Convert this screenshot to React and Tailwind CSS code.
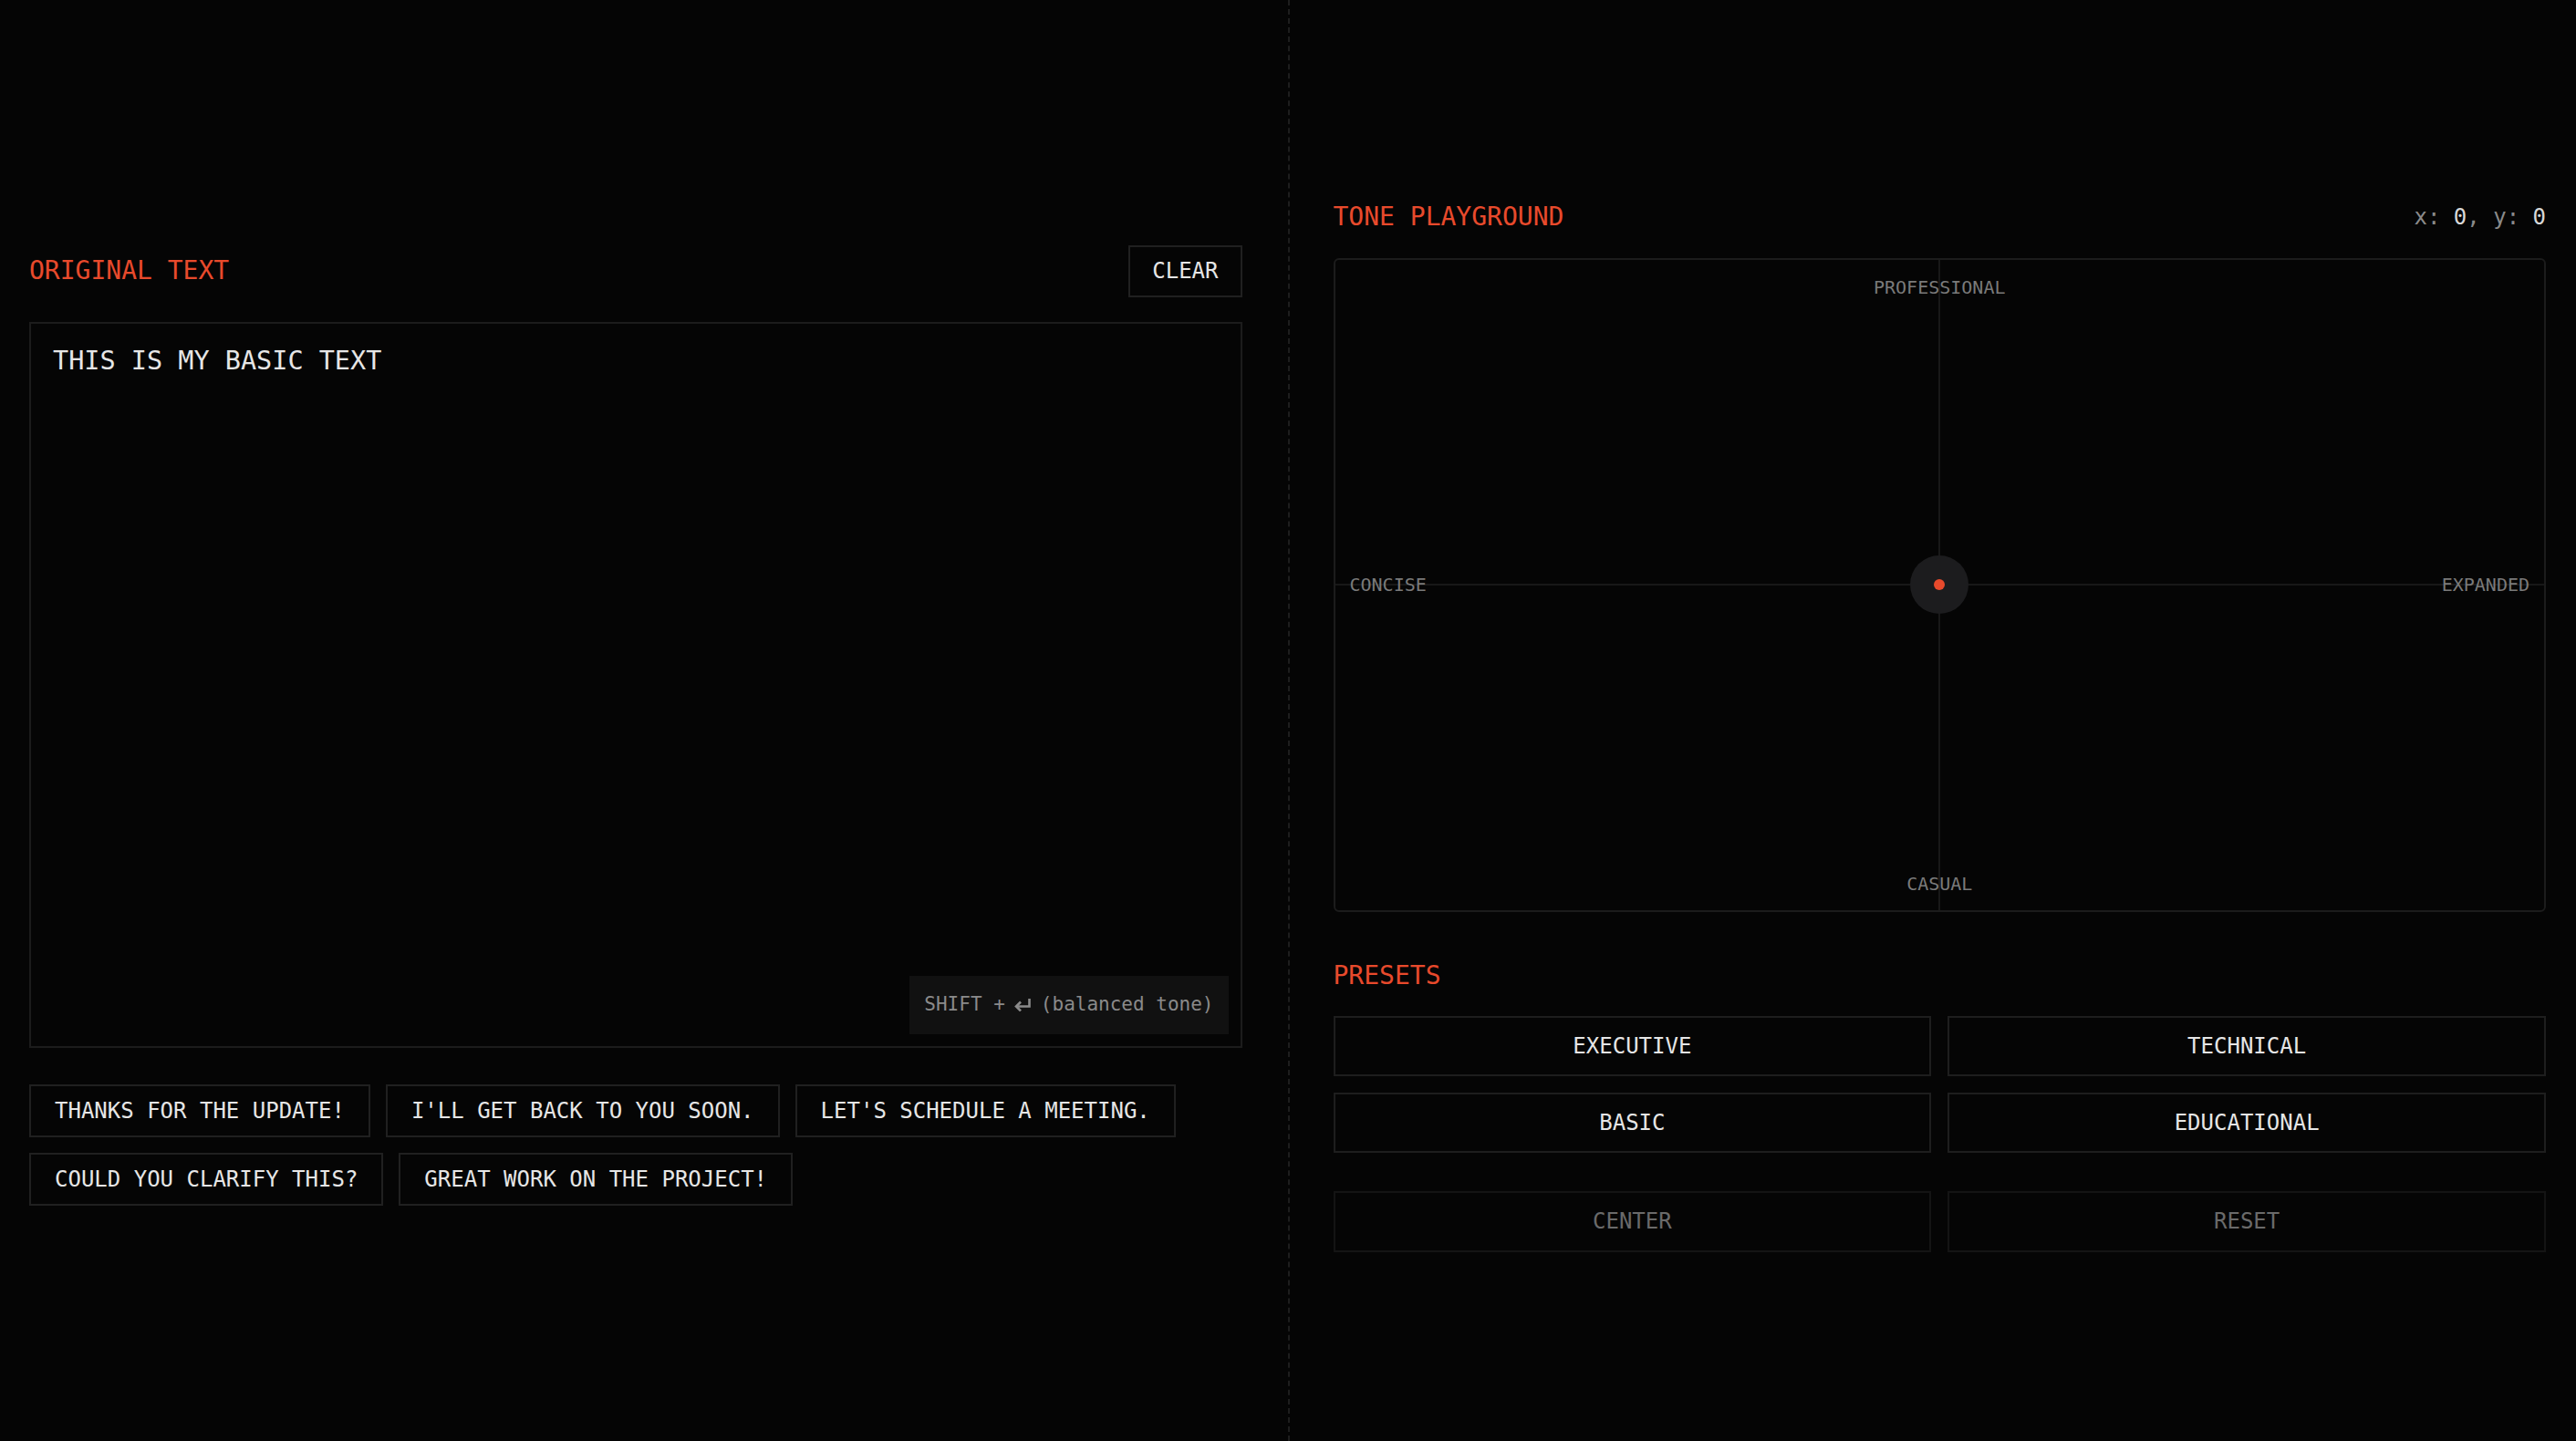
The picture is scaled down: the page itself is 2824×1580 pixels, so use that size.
import React, { useState } from "react";

const chips = [
  "THANKS FOR THE UPDATE!",
  "I'LL GET BACK TO YOU SOON.",
  "LET'S SCHEDULE A MEETING.",
  "COULD YOU CLARIFY THIS?",
  "GREAT WORK ON THE PROJECT!",
];

const presets = ["EXECUTIVE", "TECHNICAL", "BASIC", "EDUCATIONAL"];

function EnterIcon() {
  return (
    <svg width="19" height="15" viewBox="0 0 19 15" className="mx-[10px] inline-block" fill="none">
      <path d="M16.5 1v8.5H3" stroke="#8a8a8a" strokeWidth="2.6" />
      <path d="M7 4.5L2 9.5l5 5" stroke="#8a8a8a" strokeWidth="2.6" />
    </svg>
  );
}

export default function App() {
  const [text, setText] = useState("THIS IS MY BASIC TEXT");

  return (
    <div className="flex h-screen w-full bg-[#050505] pt-[10px] font-['DejaVu_Sans_Mono',monospace] text-[#e6e6e6]">
      {/* Left: original text */}
      <div className="flex flex-1 flex-col justify-center pl-8 pr-[50px]">
        <div className="mb-[27px] flex items-center justify-between">
          <h2 className="text-[28px] leading-[40px] text-[#e84a2c]">ORIGINAL TEXT</h2>
          <button className="flex h-[57px] items-center border-2 border-[#202020] px-[24px] text-[24px] text-[#e6e6e6]">
            CLEAR
          </button>
        </div>

        <div className="relative h-[796px] border-2 border-[#1c1c1c]">
          <textarea
            value={text}
            onChange={(e) => setText(e.target.value)}
            className="h-full w-full resize-none bg-transparent px-[24px] py-[20px] text-[28.5px] leading-[42px] text-[#e6e6e6] outline-none"
          />
          <div className="absolute bottom-[13px] right-[13px] flex h-[64px] items-center bg-[#111111] px-4 text-[21px] text-[#8a8a8a]">
            SHIFT +<EnterIcon />(balanced tone)
          </div>
        </div>

        <div className="mt-[40px] flex flex-wrap gap-x-[17px] gap-y-[17px]">
          {chips.map((c) => (
            <button
              key={c}
              className="flex h-[58px] items-center border-2 border-[#202020] px-[26px] text-[24px] text-[#e6e6e6]"
            >
              {c}
            </button>
          ))}
        </div>
      </div>

      {/* Divider */}
      <div className="-mt-[10px] w-0 border-l-2 border-dashed border-[#1e1e1e]" />

      {/* Right: tone playground */}
      <div className="flex flex-1 flex-col justify-center pl-[48px] pr-[33px]">
        <div className="mb-[25px] flex items-center justify-between">
          <h2 className="text-[28px] leading-[40px] text-[#e84a2c]">TONE PLAYGROUND</h2>
          <div className="text-[24px] text-[#8a8a8a]">
            x: <span className="text-[#d8d8d8]">0</span>, y: <span className="text-[#d8d8d8]">0</span>
          </div>
        </div>

        <div className="relative h-[717px] overflow-hidden rounded-[6px] border-2 border-[#1c1c1c]">
          <div className="absolute bottom-0 left-1/2 top-0 w-[2px] -translate-x-1/2 bg-[#181818]" />
          <div className="absolute left-0 right-0 top-1/2 h-[2px] -translate-y-1/2 bg-[#181818]" />
          <span className="absolute left-1/2 top-[18px] -translate-x-1/2 text-[20px] leading-[24px] text-[#7a7a7a]">
            PROFESSIONAL
          </span>
          <span className="absolute bottom-[17px] left-1/2 -translate-x-1/2 text-[20px] leading-[24px] text-[#7a7a7a]">
            CASUAL
          </span>
          <span className="absolute left-[16px] top-1/2 -translate-y-1/2 text-[20px] leading-[24px] text-[#7a7a7a]">
            CONCISE
          </span>
          <span className="absolute right-[16px] top-1/2 -translate-y-1/2 text-[20px] leading-[24px] text-[#7a7a7a]">
            EXPANDED
          </span>
          <div className="absolute left-1/2 top-1/2 flex h-[64px] w-[64px] -translate-x-1/2 -translate-y-1/2 items-center justify-center rounded-full bg-[#1c1c1e]">
            <div className="h-[12px] w-[12px] rounded-full bg-[#e84a2c]" />
          </div>
        </div>

        <h2 className="mb-[24px] mt-[50px] text-[28px] leading-[40px] text-[#e84a2c]">PRESETS</h2>
        <div className="grid grid-cols-2 gap-[18px]">
          {presets.map((p) => (
            <button
              key={p}
              className="flex h-[66px] items-center justify-center border-2 border-[#1e1e1e] text-[24px] text-[#e6e6e6]"
            >
              {p}
            </button>
          ))}
        </div>

        <div className="mt-[42px] grid grid-cols-2 gap-[18px]">
          <button className="flex h-[67px] items-center justify-center border-2 border-[#141414] text-[24px] text-[#6a6a6a]">
            CENTER
          </button>
          <button className="flex h-[67px] items-center justify-center border-2 border-[#141414] text-[24px] text-[#6a6a6a]">
            RESET
          </button>
        </div>
      </div>
    </div>
  );
}
